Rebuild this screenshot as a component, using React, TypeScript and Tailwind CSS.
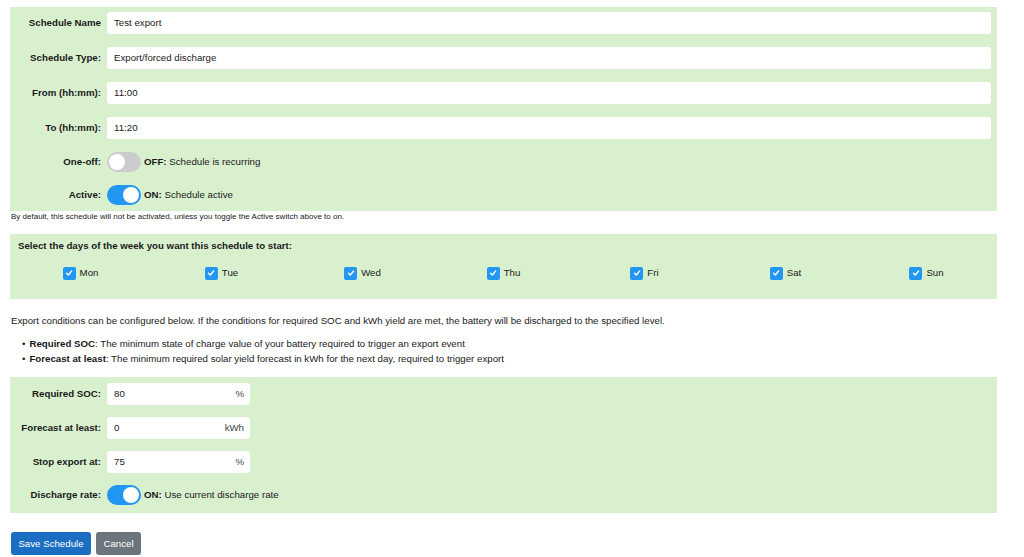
const font = { fontFamily: '"Liberation Sans", Arial, sans-serif' }

function Toggle({ on }: { on: boolean }) {
  return (
    <div
      className={`relative h-[20px] w-[34px] shrink-0 rounded-full ${on ? 'bg-[#2196f3]' : 'bg-[#cccccc]'}`}
    >
      <div
        className={`absolute top-[2px] h-[16px] w-[16px] rounded-full bg-white ${on ? 'left-[16px]' : 'left-[2px]'}`}
      />
    </div>
  )
}

function Label({ children }: { children: React.ReactNode }) {
  return <div className="w-[91px] shrink-0 text-right font-bold">{children}</div>
}

function TextRow({ label, value }: { label: string; value: string }) {
  return (
    <div className="flex h-[22px] items-center gap-[6px]">
      <Label>{label}</Label>
      <div className="flex h-[22px] flex-1 items-center rounded-[3px] bg-white pl-[7px]">{value}</div>
    </div>
  )
}

function UnitRow({ label, value, unit }: { label: string; value: string; unit: string }) {
  return (
    <div className="flex h-[22px] items-center gap-[6px]">
      <Label>{label}</Label>
      <div className="flex h-[22px] w-[143px] items-center justify-between rounded-[3px] bg-white pl-[7px] pr-[6px]">
        <span>{value}</span>
        <span className="text-[#444]">{unit}</span>
      </div>
    </div>
  )
}

function ToggleRow({ label, on, strong, text }: { label: string; on: boolean; strong: string; text: string }) {
  return (
    <div className="flex h-[20px] items-center gap-[6px]">
      <Label>{label}</Label>
      <Toggle on={on} />
      <span className="-ml-[3px]">
        <b>{strong}</b> {text}
      </span>
    </div>
  )
}

function Check() {
  return (
    <div className="flex h-[13px] w-[13px] items-center justify-center rounded-[2px] bg-[#2196f3]">
      <svg width="8" height="8" viewBox="0 0 8 8">
        <path d="M1.5 4.2 L3.3 6 L6.6 2" fill="none" stroke="white" strokeWidth="1.4" strokeLinecap="round" strokeLinejoin="round" />
      </svg>
    </div>
  )
}

const days = ['Mon', 'Tue', 'Wed', 'Thu', 'Fri', 'Sat', 'Sun']

export default function App() {
  return (
    <div className="min-h-[557px] bg-white pt-[7px] text-[9.7px] leading-none text-[#1a1a1a]" style={font}>
      <div className="ml-[10px] w-[987px]">
        {/* Schedule details */}
        <div className="flex flex-col gap-[13px] bg-[#d9f0ce] pb-[6px] pr-[6px] pt-[5px]">
          <TextRow label="Schedule Name" value="Test export" />
          <TextRow label="Schedule Type:" value="Export/forced discharge" />
          <TextRow label="From (hh:mm):" value="11:00" />
          <TextRow label="To (hh:mm):" value="11:20" />
          <ToggleRow label="One-off:" on={false} strong="OFF:" text="Schedule is recurring" />
          <ToggleRow label="Active:" on strong="ON:" text="Schedule active" />
        </div>
        <div className="mt-[1px] h-[10px] pl-[1px] text-[8px] leading-[10px]">
          By default, this schedule will not be activated, unless you toggle the Active switch above to on.
        </div>

        {/* Days */}
        <div className="mt-[12px] h-[65px] bg-[#d9f0ce] pl-[8px] pt-[7px]">
          <div className="font-bold">Select the days of the week you want this schedule to start:</div>
          <div className="-ml-[8px] mt-[16px] grid grid-cols-7">
            {days.map((d) => (
              <div key={d} className="flex items-center justify-center gap-[4px]">
                <Check />
                <span>{d}</span>
              </div>
            ))}
          </div>
        </div>

        {/* Export conditions */}
        <div className="mt-[17px] pl-[1px] leading-[10px]">
          Export conditions can be configured below. If the conditions for required SOC and kWh yield are met, the battery will be discharged to the specified level.
        </div>
        <ul className="mt-[13px] flex flex-col gap-[5px] pl-[12px] leading-[10px]">
          <li className="flex gap-[4px]">
            <span>•</span>
            <span>
              <b>Required SOC</b>: The minimum state of charge value of your battery required to trigger an export event
            </span>
          </li>
          <li className="flex gap-[4px]">
            <span>•</span>
            <span>
              <b>Forecast at least</b>: The minimum required solar yield forecast in kWh for the next day, required to trigger export
            </span>
          </li>
        </ul>

        <div className="mt-[13px] flex flex-col gap-[12px] bg-[#d9f0ce] pb-[8px] pt-[6px]">
          <UnitRow label="Required SOC:" value="80" unit="%" />
          <UnitRow label="Forecast at least:" value="0" unit="kWh" />
          <UnitRow label="Stop export at:" value="75" unit="%" />
          <ToggleRow label="Discharge rate:" on strong="ON:" text="Use current discharge rate" />
        </div>

        {/* Actions */}
        <div className="ml-[1px] mt-[19px] flex gap-[5px]">
          <button className="h-[23px] w-[80px] rounded-[3px] bg-[#1b6ec2] text-[9.7px] text-white">Save Schedule</button>
          <button className="h-[23px] w-[45px] rounded-[3px] bg-[#6c757d] text-[9.7px] text-white">Cancel</button>
        </div>
      </div>
    </div>
  )
}
